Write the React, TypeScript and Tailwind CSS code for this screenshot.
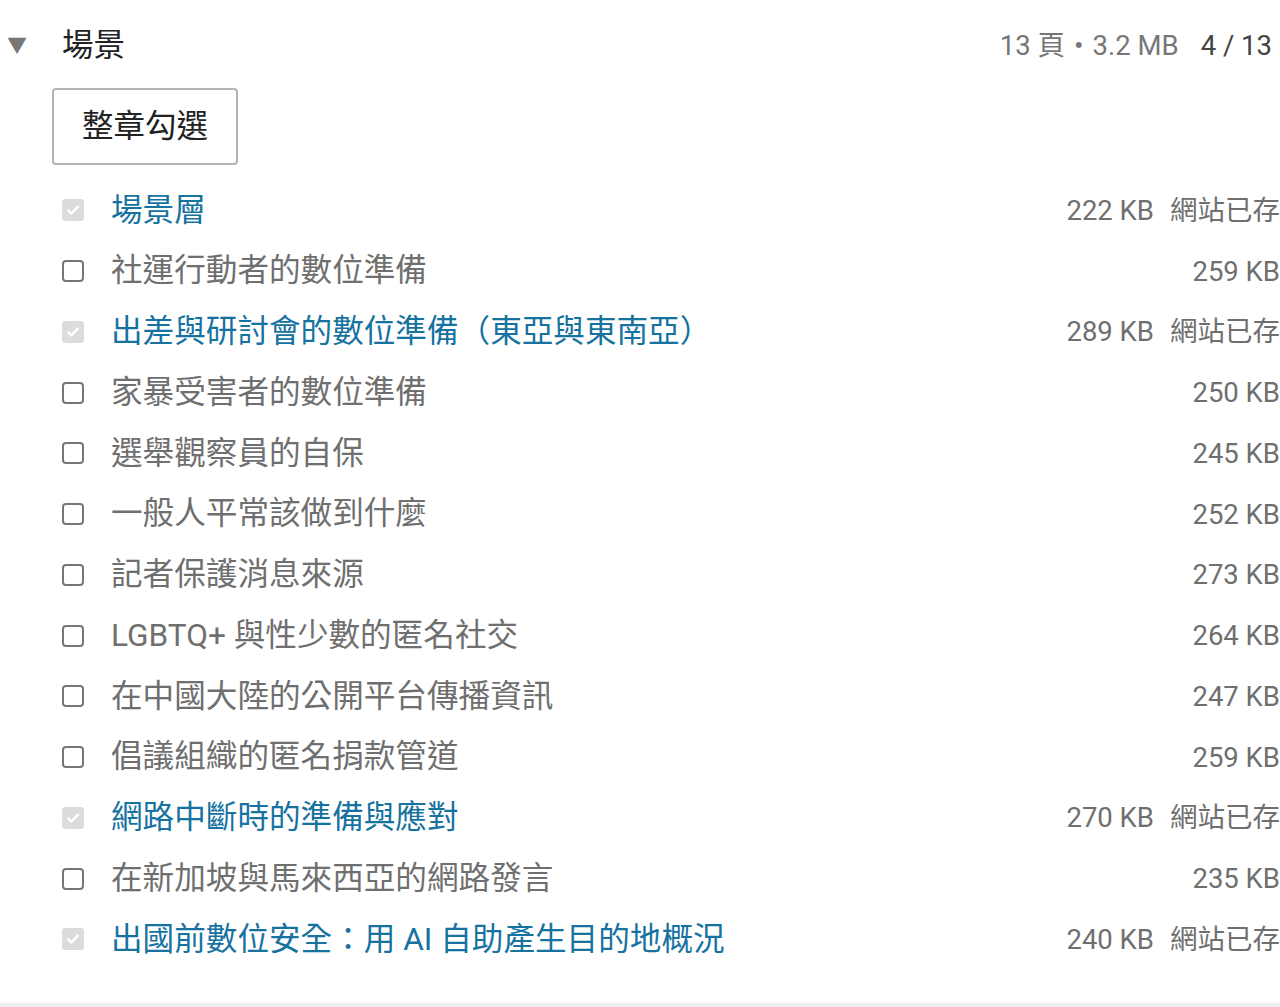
const items = [
  { title: '場景層', size: '222 KB', saved: true },
  { title: '社運行動者的數位準備', size: '259 KB', saved: false },
  { title: '出差與研討會的數位準備（東亞與東南亞）', size: '289 KB', saved: true },
  { title: '家暴受害者的數位準備', size: '250 KB', saved: false },
  { title: '選舉觀察員的自保', size: '245 KB', saved: false },
  { title: '一般人平常該做到什麼', size: '252 KB', saved: false },
  { title: '記者保護消息來源', size: '273 KB', saved: false },
  { title: 'LGBTQ+ 與性少數的匿名社交', size: '264 KB', saved: false },
  { title: '在中國大陸的公開平台傳播資訊', size: '247 KB', saved: false },
  { title: '倡議組織的匿名捐款管道', size: '259 KB', saved: false },
  { title: '網路中斷時的準備與應對', size: '270 KB', saved: true },
  { title: '在新加坡與馬來西亞的網路發言', size: '235 KB', saved: false },
  { title: '出國前數位安全：用 AI 自助產生目的地概況', size: '240 KB', saved: true },
]

function Check({ checked }: { checked: boolean }) {
  if (checked) {
    return (
      <span className="flex items-center justify-center w-[22px] h-[22px] rounded-[3px] bg-[#dcdcdc] shrink-0">
        <svg viewBox="0 0 16 16" className="w-[16px] h-[16px]">
          <path d="M3.2 8.4 L6.4 11.4 L12.8 4.6" fill="none" stroke="#fff" strokeWidth="2.4" strokeLinecap="round" strokeLinejoin="round" />
        </svg>
      </span>
    )
  }
  return <span className="block w-[22px] h-[22px] rounded-[4px] border-2 border-[#767676] bg-white shrink-0" />
}

export default function App() {
  return (
    <div className="w-[1280px] h-[1007px] bg-white overflow-hidden text-[#222]" style={{ fontFamily: 'Roboto, "Noto Sans CJK TC", sans-serif' }}>
      <div className="flex items-center h-[88px] pt-[3px] pr-[8px]">
        <span className="w-[62px] pl-[7px] text-[20px] text-[#777]">▼</span>
        <span className="text-[31.5px] text-[#222]">場景</span>
        <span className="ml-auto text-[27.5px] text-[#777]">13 頁・3.2 MB</span>
        <span className="ml-[22px] text-[27.5px] text-[#444]">4 / 13</span>
      </div>
      <div className="pl-[52px]">
        <button className="h-[77px] w-[186px] border-2 border-[#b4b4b4] rounded-[4px] bg-white text-[31.5px] text-[#222]">
          整章勾選
        </button>
      </div>
      <div className="pt-[15px] pb-[33px] border-b-4 border-[#efefef]">
        {items.map((it) => (
          <div key={it.title} className="flex items-center h-[60.75px] pl-[62px]">
            <Check checked={it.saved} />
            <span className={`ml-[27px] text-[31.6px] whitespace-nowrap ${it.saved ? 'text-[#16729f]' : 'text-[#6f6f6f]'}`}>
              {it.title}
            </span>
            <span className="ml-auto text-[27.5px] text-[#6f6f6f] whitespace-nowrap">{it.size}</span>
            {it.saved && <span className="ml-[16px] text-[27.5px] text-[#6f6f6f] whitespace-nowrap">網站已存</span>}
          </div>
        ))}
      </div>
    </div>
  )
}
